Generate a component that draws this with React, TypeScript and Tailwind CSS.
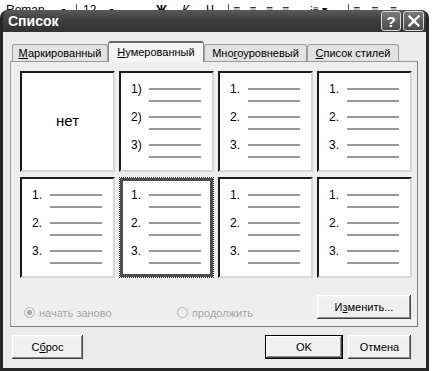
import React from "react";

const font = { fontFamily: '"Liberation Sans", Arial, sans-serif' };

const btnShadow =
  "shadow-[inset_-1px_-1px_#404040,inset_1px_1px_#ffffff,inset_-2px_-2px_#8a8a8a,inset_2px_2px_#f4f4f4]";

function ListCell({ kind, selected }: { kind: "none" | "paren" | "dot"; selected?: boolean }) {
  const inner =
    kind === "none" ? (
      <div className="h-full flex items-center justify-center text-[15px] text-black">нет</div>
    ) : (
      <div className={`flex flex-col gap-[4px] ${selected ? "pt-[8px] pl-[8px]" : "pt-[10px] pl-[10px]"}`}>
        {[1, 2, 3].map((n) => (
          <div key={n} className="flex flex-col">
            <div className="flex items-center h-[12px]">
              <span className="w-[18px] text-[12px] leading-none text-black">
                {n}
                {kind === "paren" ? ")" : "."}
              </span>
              <div className="h-[2px] w-[52px] bg-[#9a9a9a]" />
            </div>
            <div className="flex items-center h-[12px] pl-[18px]">
              <div className="h-[2px] w-[52px] bg-[#9a9a9a]" />
            </div>
          </div>
        ))}
      </div>
    );

  if (selected) {
    return (
      <div className="h-[101px] border border-dotted border-[#222] bg-white">
        <div className="h-full border-[3px] border-[#4e4e4e] bg-white">{inner}</div>
      </div>
    );
  }
  return (
    <div className="h-[101px] bg-white border-2 border-t-[#1c1c1c] border-l-[#1c1c1c] border-r-[#d6d6d6] border-b-[#d6d6d6]">
      {inner}
    </div>
  );
}

function Tab({ children, w, active }: { children: React.ReactNode; w: string; active?: boolean }) {
  return (
    <div
      className={`${w} flex items-center justify-center text-[11px] text-black rounded-t-[3px] border border-b-0 ${
        active
          ? "h-[21px] bg-[#f4f4f4] border-[#8c8c8c] border-t-[#6a6a6a] border-t-2 z-10"
          : "h-[18px] bg-[#e2e2e2] border-[#9c9c9c]"
      }`}
    >
      {children}
    </div>
  );
}

function Radio({ checked }: { checked?: boolean }) {
  return (
    <div className="w-[11px] h-[11px] rounded-full border border-[#b4b4b4] bg-[#efefef] flex items-center justify-center">
      {checked && <div className="w-[5px] h-[5px] rounded-full bg-[#a8a8a8]" />}
    </div>
  );
}

export default function App() {
  return (
    <div className="w-[432px] h-[371px] bg-white overflow-hidden" style={font}>
      {/* toolbar behind the dialog, only its lower edge shows */}
      <div className="h-[10px] overflow-hidden flex items-end text-[12px] text-black leading-none">
        <div className="flex items-center gap-[2px] mb-[-6px] pl-[6px]">
          <span className="w-[52px]">Roman</span>
          <span className="text-[7px] w-[14px]">▼</span>
          <span className="border-l border-[#555] pl-[6px] w-[30px]">12</span>
          <span className="text-[7px] w-[46px]">▼</span>
          <span className="font-bold w-[24px]">Ж</span>
          <span className="italic w-[22px]">К</span>
          <span className="underline w-[20px]">Ч</span>
          <span className="border-l border-[#555] pl-[4px] w-[80px] tracking-[3px]">≡ ≡ ≡ ≡</span>
          <span className="text-[10px] w-[36px]">⁝≡ ▾</span>
          <span className="border-l border-[#555] pl-[4px] w-[70px] tracking-[4px]">≡ ≡ ≡</span>
        </div>
      </div>

      {/* dialog */}
      <div className="w-[429px] h-[361px] flex flex-col rounded-t-[8px] bg-[#2c2c2c] border-x-[3px] border-b-[3px] border-[#262626]">
        {/* title bar */}
        <div className="h-[22px] flex items-center justify-between pl-[5px] pr-[2px] rounded-t-[6px] bg-gradient-to-b from-[#5a5a5a] via-[#3c3c3c] to-[#333333]">
          <span className="text-white font-bold text-[14px]">Список</span>
          <div className="flex gap-[2px]">
            <div className="w-[20px] h-[20px] rounded-[3px] border border-[#d8d8d8] bg-gradient-to-b from-[#7a7a7a] to-[#4a4a4a] flex items-center justify-center text-white font-bold text-[15px] leading-none">
              ?
            </div>
            <div className="w-[21px] h-[20px] rounded-[3px] border border-[#d8d8d8] bg-gradient-to-b from-[#7a7a7a] to-[#4a4a4a] flex items-center justify-center">
              <svg width="12" height="12" viewBox="0 0 12 12">
                <path d="M1.5 1.5 L10.5 10.5 M10.5 1.5 L1.5 10.5" stroke="white" strokeWidth="2.4" strokeLinecap="square" />
              </svg>
            </div>
          </div>
        </div>

        {/* body */}
        <div className="flex-1 bg-[#ebebeb] pl-[7px] pr-[8px] pt-[9px] flex flex-col">
          {/* tabs */}
          <div className="flex items-end ml-[2px] mb-[-1px]">
            <Tab w="w-[96px]">
              <span>
                <u>М</u>аркированный
              </span>
            </Tab>
            <Tab w="w-[96px]" active>
              <span>
                <u>Н</u>умерованный
              </span>
            </Tab>
            <Tab w="w-[103px]">
              <span>
                Мно<u>г</u>оуровневый
              </span>
            </Tab>
            <Tab w="w-[92px]">
              <span>
                <u>С</u>писок стилей
              </span>
            </Tab>
          </div>

          {/* panel */}
          <div className="h-[266px] border border-[#9a9a9a] border-r-[#7c7c7c] border-b-[#7c7c7c] bg-[#eeeeee] flex flex-col pt-[9px] pl-[9px] pr-[6px] pb-[7px]">
            <div className="grid grid-cols-[95px_95px_95px_95px] grid-rows-[101px_101px] gap-x-[4px] gap-y-[5px]">
              <ListCell kind="none" />
              <ListCell kind="paren" />
              <ListCell kind="dot" />
              <ListCell kind="dot" />
              <ListCell kind="dot" />
              <ListCell kind="dot" selected />
              <ListCell kind="dot" />
              <ListCell kind="dot" />
            </div>

            <div className="mt-auto flex items-end">
              <div className="flex items-center gap-[4px] w-[157px] pl-[4px] text-[11px] text-[#a6a6a6] mb-[-2px]">
                <Radio checked />
                <span>начать заново</span>
              </div>
              <div className="flex items-center gap-[4px] text-[11px] text-[#a6a6a6] mb-[-2px]">
                <Radio />
                <span>продолжить</span>
              </div>
              <div
                className={`ml-auto w-[94px] h-[24px] bg-[#f0f0f0] flex items-center justify-center text-[11px] text-black ${btnShadow}`}
              >
                <span>
                  И<u>з</u>менить...
                </span>
              </div>
            </div>
          </div>

          {/* bottom buttons */}
          <div className="mt-[8px] flex items-center">
            <div
              className={`ml-[2px] w-[71px] h-[24px] bg-[#f0f0f0] flex items-center justify-center text-[11px] text-black ${btnShadow}`}
            >
              <span>
                С<u>б</u>рос
              </span>
            </div>
            <div className="ml-auto w-[78px] h-[24px] border border-black">
              <div
                className={`w-full h-full bg-[#f0f0f0] flex items-center justify-center text-[11px] text-black ${btnShadow}`}
              >
                OK
              </div>
            </div>
            <div
              className={`ml-[5px] mr-[7px] w-[63px] h-[24px] bg-[#f0f0f0] flex items-center justify-center text-[11px] text-black ${btnShadow}`}
            >
              Отмена
            </div>
          </div>
        </div>
      </div>
    </div>
  );
}
